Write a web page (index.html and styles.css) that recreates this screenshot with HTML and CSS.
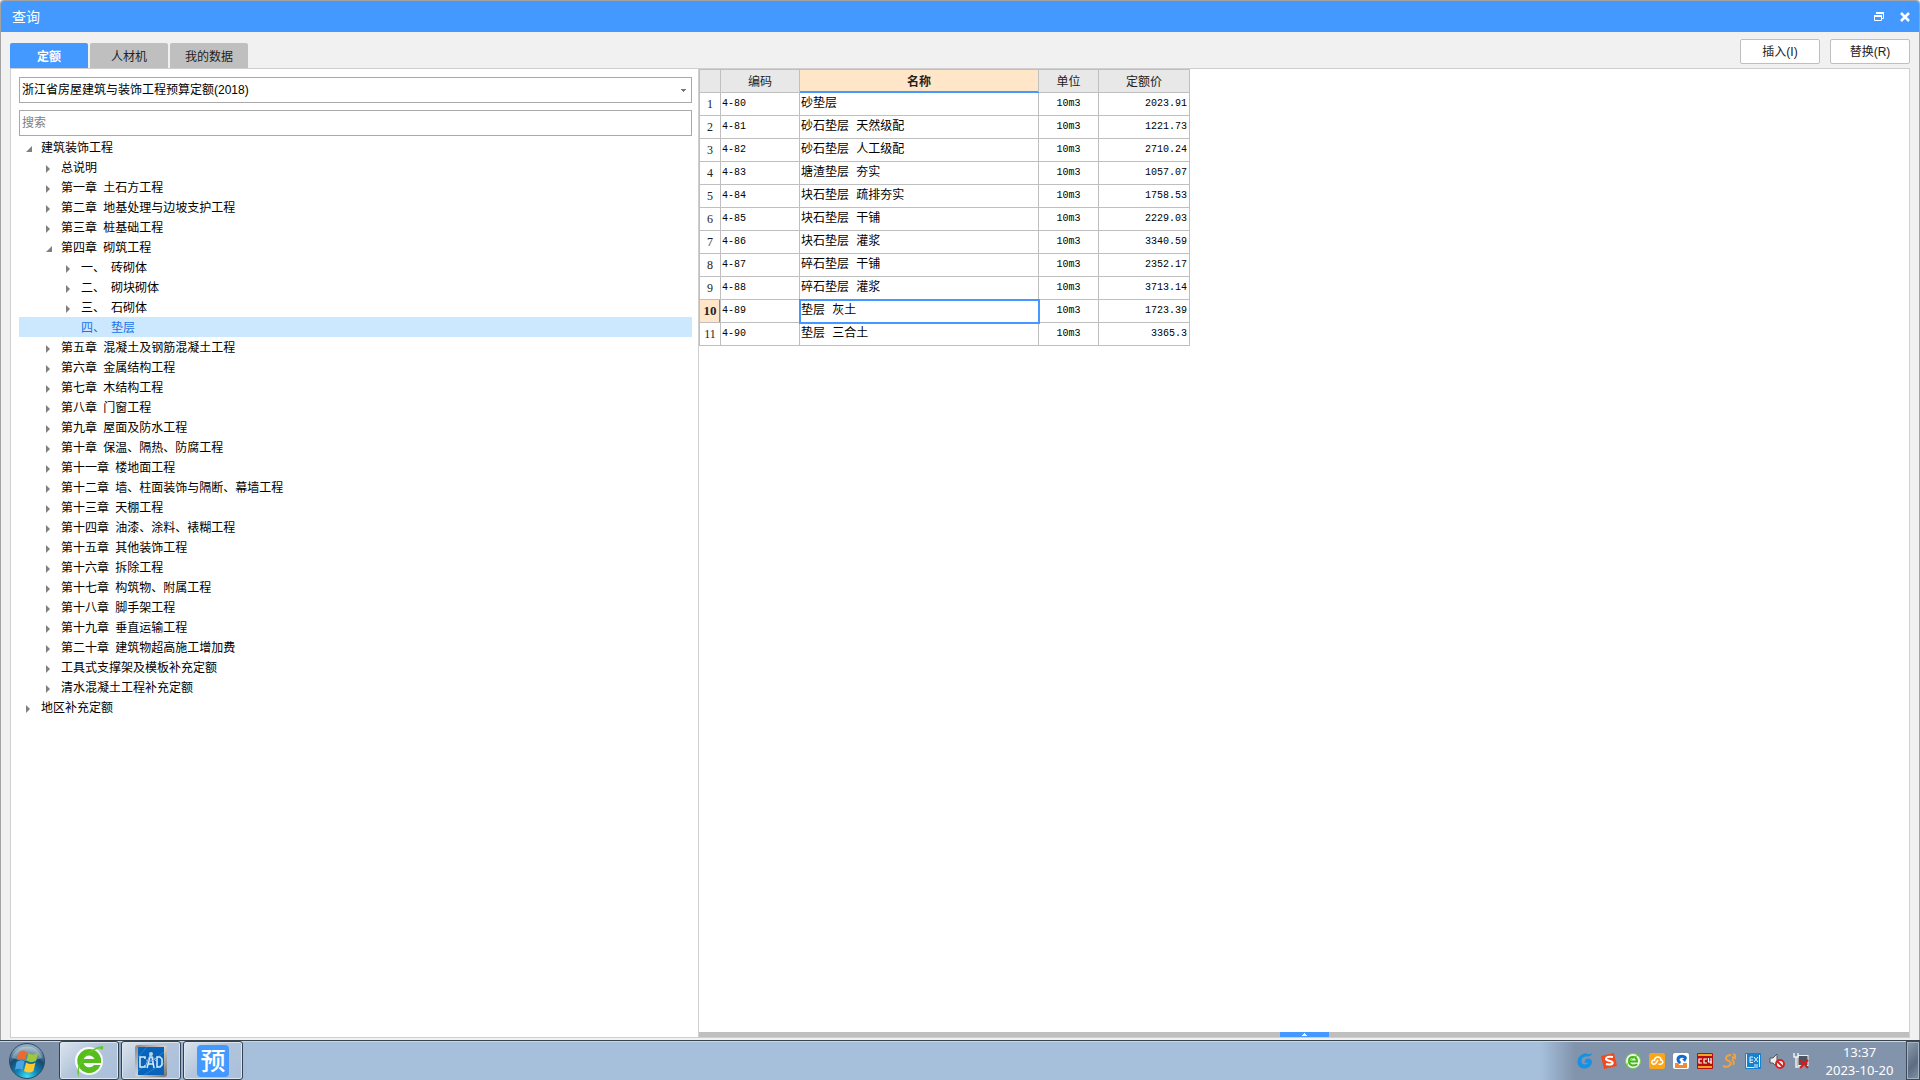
FILE: index.html
```html
<!DOCTYPE html>
<html lang="zh-CN">
<head>
<meta charset="utf-8">
<title>查询</title>
<link rel="stylesheet" href="styles.css">
</head>
<body>
<main class="window">
  <header class="titlebar">
    <h1 class="title">查询</h1>
    <button class="win-btn" aria-label="还原"><svg width="12" height="12" viewBox="0 0 12 12"><path d="M3 2H10.500V7.500H9M1.500 5H8.500V9.500H1.500Z" fill="none" stroke="#fff" stroke-width="1"/><path d="M3 2H11M1 5H9" stroke="#fff" stroke-width="2"/></svg></button>
    <button class="win-btn" aria-label="关闭"><svg width="12" height="12" viewBox="0 0 12 12"><path d="M2 2L10 10M10 2L2 10" fill="none" stroke="#fff" stroke-width="2.500"/></svg></button>
  </header>
  <div class="toolbar">
    <nav class="tabs">
      <button class="tab active">定额</button>
      <button class="tab">人材机</button>
      <button class="tab">我的数据</button>
    </nav>
    <div class="actions">
      <button class="action">插入(I)</button>
      <button class="action">替换(R)</button>
    </div>
  </div>
  <div class="panels">
    <section class="side">
      <select class="field library" aria-label="定额库"><option>浙江省房屋建筑与装饰工程预算定额(2018)</option></select>
      <input class="field search" type="text" placeholder="搜索" aria-label="搜索">
      <ul class="tree">
        <li class="node open">建筑装饰工程</li>
        <li class="node l2">总说明</li>
        <li class="node l2"><span class="chapter">第一章</span> 土石方工程</li>
        <li class="node l2"><span class="chapter">第二章</span> 地基处理与边坡支护工程</li>
        <li class="node l2"><span class="chapter">第三章</span> 桩基础工程</li>
        <li class="node l2 open"><span class="chapter">第四章</span> 砌筑工程</li>
        <li class="node l3"><span class="num">一、</span>砖砌体</li>
        <li class="node l3"><span class="num">二、</span>砌块砌体</li>
        <li class="node l3"><span class="num">三、</span>石砌体</li>
        <li class="node l3 selected"><span class="num">四、</span>垫层</li>
        <li class="node l2"><span class="chapter">第五章</span> 混凝土及钢筋混凝土工程</li>
        <li class="node l2"><span class="chapter">第六章</span> 金属结构工程</li>
        <li class="node l2"><span class="chapter">第七章</span> 木结构工程</li>
        <li class="node l2"><span class="chapter">第八章</span> 门窗工程</li>
        <li class="node l2"><span class="chapter">第九章</span> 屋面及防水工程</li>
        <li class="node l2"><span class="chapter">第十章</span> 保温、隔热、防腐工程</li>
        <li class="node l2"><span class="chapter">第十一章</span> 楼地面工程</li>
        <li class="node l2"><span class="chapter">第十二章</span> 墙、柱面装饰与隔断、幕墙工程</li>
        <li class="node l2"><span class="chapter">第十三章</span> 天棚工程</li>
        <li class="node l2"><span class="chapter">第十四章</span> 油漆、涂料、裱糊工程</li>
        <li class="node l2"><span class="chapter">第十五章</span> 其他装饰工程</li>
        <li class="node l2"><span class="chapter">第十六章</span> 拆除工程</li>
        <li class="node l2"><span class="chapter">第十七章</span> 构筑物、附属工程</li>
        <li class="node l2"><span class="chapter">第十八章</span> 脚手架工程</li>
        <li class="node l2"><span class="chapter">第十九章</span> 垂直运输工程</li>
        <li class="node l2"><span class="chapter">第二十章</span> 建筑物超高施工增加费</li>
        <li class="node l2">工具式支撑架及模板补充定额</li>
        <li class="node l2">清水混凝土工程补充定额</li>
        <li class="node">地区补充定额</li>
      </ul>
    </section>
    <section class="content">
      <div class="sheet">
        <table class="grid">
          <colgroup><col class="c-idx"><col class="c-code"><col class="c-name"><col class="c-unit"><col class="c-price"></colgroup>
          <thead><tr><th></th><th>编码</th><th class="current">名称</th><th>单位</th><th>定额价</th></tr></thead>
          <tbody>
            <tr><th>1</th><td>4-80</td><td>砂垫层</td><td>10m3</td><td>2023.91</td></tr>
            <tr><th>2</th><td>4-81</td><td>砂石垫层 天然级配</td><td>10m3</td><td>1221.73</td></tr>
            <tr><th>3</th><td>4-82</td><td>砂石垫层 人工级配</td><td>10m3</td><td>2710.24</td></tr>
            <tr><th>4</th><td>4-83</td><td>塘渣垫层 夯实</td><td>10m3</td><td>1057.07</td></tr>
            <tr><th>5</th><td>4-84</td><td>块石垫层 疏排夯实</td><td>10m3</td><td>1758.53</td></tr>
            <tr><th>6</th><td>4-85</td><td>块石垫层 干铺</td><td>10m3</td><td>2229.03</td></tr>
            <tr><th>7</th><td>4-86</td><td>块石垫层 灌浆</td><td>10m3</td><td>3340.59</td></tr>
            <tr><th>8</th><td>4-87</td><td>碎石垫层 干铺</td><td>10m3</td><td>2352.17</td></tr>
            <tr><th>9</th><td>4-88</td><td>碎石垫层 灌浆</td><td>10m3</td><td>3713.14</td></tr>
            <tr><th class="current">10</th><td>4-89</td><td class="focused">垫层 灰土</td><td>10m3</td><td>1723.39</td></tr>
            <tr><th>11</th><td>4-90</td><td>垫层 三合土</td><td>10m3</td><td>3365.3</td></tr>
          </tbody>
        </table>
      </div>
      <div class="splitter"><button class="splitter-handle" aria-label="展开"><svg width="5" height="3" viewBox="0 0 5 3"><path d="M2 0H3V1H4V2H5V3H0V2H1V1H2Z" fill="#fff"/></svg></button></div>
    </section>
  </div>
</main>
<footer class="taskbar">
  <button class="start" aria-label="开始">
    <svg width="36" height="38" viewBox="0 0 36 38">
      <defs><radialGradient id="orb" cx=".5" cy=".95" r=".85"><stop offset="0" stop-color="#3fe0f5"/><stop offset=".35" stop-color="#0f86b8"/><stop offset=".7" stop-color="#164a70"/><stop offset="1" stop-color="#8fa9bd"/></radialGradient></defs>
      <circle cx="18" cy="19" r="17.500" fill="url(#orb)" stroke="#294b68"/>
      <path d="M3 16A15.500 15.500 0 0 1 33 16Q18 22 3 16Z" fill="#fff" opacity=".3"/>
      <path d="M10 10Q14 7 18 10L16 18Q12 15.500 8 18Z" fill="#ee6a2c"/>
      <path d="M19.500 11Q24 14 29 11L27 19Q22 21.500 17.500 18.500Z" fill="#9cc83c"/>
      <path d="M7.500 20Q11.500 17 15.500 19.500L13.500 28Q10 25.500 6 28Z" fill="#4aa3e4"/>
      <path d="M17 20.500Q22 23.500 26.500 20.500L24.500 29Q20 32 15 29Z" fill="#fdc92f"/>
    </svg>
  </button>
  <button class="task" aria-label="浏览器">
    <svg width="32" height="34" viewBox="0 0 32 34">
      <circle cx="16" cy="17" r="14" fill="#fff" opacity=".9"/>
      <path d="M16 5a12 12 0 1 0 11.500 16H21a6 6 0 0 1-10.500-2H28A12 12 0 0 0 16 5ZM10.500 15a6 6 0 0 1 11 0Z" fill="#56bd1c" fill-rule="evenodd"/>
      <path d="M6 33C0 26 12 4 30 2Q31 4 29 6Q27 3 22 6C11 11 5 21 6 29Q5 31 6 33Z" fill="#65c925"/>
    </svg>
  </button>
  <button class="task" aria-label="CAD">
    <svg width="32" height="32" viewBox="0 0 32 32">
      <defs><linearGradient id="frame" x2="1" y2="1"><stop offset="0" stop-color="#8d8480"/><stop offset=".5" stop-color="#d5d0cc"/><stop offset="1" stop-color="#77706c"/></linearGradient></defs>
      <rect width="32" height="32" rx="3" fill="url(#frame)"/><rect x="3" y="2" width="26" height="28" fill="#0864ba"/>
      <path d="M3 12L12 2M3 26L29 7M9 30L29 18" stroke="#2384d3"/>
      <path d="M10 14V12H5V22H10V20M12 23L15 12H17L19 23M13 19H18M22 12H25L27 14V20L25 22H22Z" fill="none" stroke="#d9edfb" stroke-width="1.500"/>
      <path d="M15 10L10 22M16 10L21 16M11 15Q16 18 21 13" fill="none" stroke="#8fb8da"/><circle cx="16" cy="9" r="2" fill="#b9d3e8"/>
    </svg>
  </button>
  <button class="task"><span class="budget-icon">预</span></button>
  <div class="tray">
    <svg width="16" height="16" viewBox="0 0 16 16"><path d="M15.500 0Q14 4 9 3.500Q4.500 4 4.500 8Q4.500 11.500 8 11.500Q10.500 11.500 11 9.500Q9 10.500 7.500 9Q8 6 11 5.500Q15 5.500 15 9Q14.500 13 10.500 15Q4 17 1 12Q-1 6 4 2Q8-1 11 1Q14 1.500 15.500 0Z" fill="#1592e6"/></svg>
    <svg width="16" height="16" viewBox="0 0 16 16"><path d="M0 3L13 0L16 13L3 16Z" fill="#f2491c"/><path d="M12 4Q5 3 5 6Q5 7 9 8Q13 9 11 11Q9 12 5 11" fill="none" stroke="#fff" stroke-width="2.200"/></svg>
    <svg width="16" height="16" viewBox="0 0 16 16"><circle cx="8" cy="8" r="7.500" fill="#eef8e9" stroke="#79c95a"/><path d="M4.500 8.500H12Q12 4 8 4Q4 4 4 8Q4 12 8 12.500Q11 12.500 12 11" fill="none" stroke="#42b51c" stroke-width="2"/><path d="M2 15Q0 9 15 1" fill="none" stroke="#5fc92d"/></svg>
    <svg width="16" height="16" viewBox="0 0 16 16"><rect width="16" height="16" rx="2" fill="#fba618"/><path d="M9 7L7 10Q6 11.500 4 11Q2 10 3 8Q4 7 5.500 7.500Q6 4 9 4Q12 4 12 7Q14.500 8 13.500 10Q12 12 9.500 11" fill="none" stroke="#fff" stroke-width="1.500"/></svg>
    <svg width="16" height="16" viewBox="0 0 16 16"><rect width="16" height="16" rx="2" fill="#fff"/><path d="M13 3Q7 0 4 4Q2 9 7 11L8 9Q5 6 8 5Q10 4 11 6H9L12 9L14 5Z" fill="#126bd0"/><path d="M2 10H6V12H10V10H14V15H2Z" fill="#f08a35"/></svg>
    <svg width="16" height="16" viewBox="0 0 16 16"><rect width="16" height="16" rx="1" fill="#b80e0a"/><path d="M1 2H15M1 14H15" stroke="#f6a224" stroke-width="2"/><path d="M5 6H2V10H5M10 6H7V10H10M11.500 5V9H15M14 5V11" fill="none" stroke="#fff" stroke-width="1.200"/></svg>
    <svg width="16" height="16" viewBox="0 0 16 16"><path d="M10 2Q5 2 5 5.500Q5 7 8 8Q11 10 9 12Q7 15 2 13M12 1L14 2V5L11 4M11 6Q14 9 12 12" fill="none" stroke="#f2a13a" stroke-width="2"/></svg>
    <svg width="16" height="16" viewBox="0 0 16 16"><rect width="16" height="16" rx="1" fill="#1681cf"/><path d="M1.500 1V14.500H9M14.500 2V14M5 4H8M5 7H8M5 4V9.500H8M9 4L13 9M13 4L9 9M9 12H13M9 14H13" fill="none" stroke="#e5f5ff" stroke-width="1"/></svg>
    <svg width="16" height="16" viewBox="0 0 16 16"><path d="M1 5H4L8 1V14L4 10H1Z" fill="#eee" stroke="#555"/><circle cx="11" cy="11" r="4" fill="#fff" stroke="#dc2020" stroke-width="2"/><path d="M8 8L14 14" stroke="#dc2020" stroke-width="2"/></svg>
    <svg width="16" height="16" viewBox="0 0 16 16"><rect x="5" y="2.500" width="10" height="10" fill="#4c5560" stroke="#eee"/><path d="M1 0V4H5V0M3 4V14H8" fill="none" stroke="#eee" stroke-width="1.500"/><path d="M7 7L15 15M15 7L7 15" stroke="#e01717" stroke-width="2"/></svg>
  </div>
  <div class="clock"><time>13:37</time><time>2023-10-20</time></div>
  <button class="show-desktop" aria-label="显示桌面"></button>
</footer>
</body>
</html>
```
FILE: styles.css
```css
* { box-sizing: border-box; }

body {
  margin: 0;
  min-height: 100vh;
  display: flex;
  flex-direction: column;
  background: #f1f1f1;
  color: #000;
  font: 12px/20px "Liberation Sans", "Noto Sans CJK SC", sans-serif;
}

button, input, select { font: inherit; color: inherit; margin: 0; padding: 0; border: 0; }

.window {
  flex: 1;
  display: flex;
  flex-direction: column;
  border: 1px solid #a3a3a3;
  border-bottom: 0;
  border-radius: 4px 4px 0 0;
  overflow: hidden;
}

.titlebar {
  display: flex;
  align-items: center;
  height: 31px;
  padding: 0 8px 0 11px;
  gap: 14px;
  background: #4399ff;
  color: #fff;
}
.title { flex: 1; margin: 0; font-size: 14px; font-weight: 400; }
.win-btn { display: flex; background: none; }

.toolbar { display: flex; justify-content: space-between; height: 36px; padding: 0 9px; }
.tabs { display: flex; align-items: flex-end; gap: 2px; }
.tab { width: 78px; height: 25px; padding-top: 2px; background: #bfbfbf; border-radius: 2px 2px 0 0; color: #222; }
.tab.active { background: #4399ff; color: #fff; font-weight: 700; }
.actions { display: flex; gap: 10px; padding-top: 7px; }
.action { width: 80px; height: 25px; background: #fff; border: 1px solid #bfbfbf; border-radius: 2px; color: #222; }

.panels {
  flex: 1;
  display: flex;
  margin: 0 9px 2px;
  border: 1px solid #cfcfcf;
  background: #fff;
}
.side { width: 688px; padding: 8px 6px 0 8px; border-right: 1px solid #cfcfcf; }
.field { display: block; width: 100%; height: 26px; border: 1px solid #a9a9a9; background: #fff; padding: 0 2px; outline: 0; }
.field::placeholder { color: #808080; opacity: 1; }
.library {
  appearance: none;
  background: linear-gradient(#777, #777) right 5px top 11px / 5px 1px no-repeat,
    linear-gradient(#777, #777) right 6px top 12px / 3px 1px no-repeat,
    linear-gradient(#777, #777) right 7px top 13px / 1px 1px no-repeat, #fff;
}
.search { margin-top: 7px; }

.tree { list-style: none; margin: 1px 0 0; padding: 0; }
.node { display: flex; align-items: center; height: 20px; padding: 2px 0 0 7px; white-space: pre; }
.node::before {
  content: "";
  width: 4px;
  height: 8px;
  margin: 2px 11px 0 0;
  background: #808080;
  clip-path: polygon(0 0, 100% 50%, 0 100%);
}
.node.open::before { width: 6px; height: 6px; margin-right: 9px; clip-path: polygon(100% 0, 100% 100%, 0 100%); }
.node.l2 { padding-left: 27px; }
.node.l3 { padding-left: 47px; }
.chapter { margin-right: 3px; }
.num { width: 30px; }
.selected { background: #cce8ff; color: #1874e8; }
.selected::before { visibility: hidden; }

.content { flex: 1; display: flex; flex-direction: column; }
.sheet { flex: 1; }
.grid { border-collapse: collapse; table-layout: fixed; width: 491px; }
.c-idx { width: 21px; }
.c-code { width: 79px; }
.c-name { width: 239px; }
.c-unit { width: 60px; }
.c-price { width: 91px; }
.grid tr { height: 23px; }
.grid th, .grid td { padding: 0 1px; border: 1px solid #bfbfbf; line-height: 22px; white-space: nowrap; }
.grid th { font-weight: 400; color: #222; }
.grid thead th { background: #e8e8e8; padding-top: 2px; line-height: 20px; }
.grid tbody th { padding: 0; font-family: "Liberation Serif", serif; font-size: 12px; }
.grid tbody th.current { font-size: 13px; }
.grid td { font-family: "Liberation Mono", "Noto Sans CJK SC", monospace; font-size: 10px; }
.grid td:nth-child(3) { font-size: 12px; }
.grid td:nth-child(4) { text-align: center; }
.grid td:nth-child(5) { text-align: right; padding-right: 2px; }
.grid th.current, .grid thead th.current { background: #ffe6c8; font-weight: 700; }
.grid thead th.current { border-bottom-color: #4399ff; box-shadow: inset 0 -1px #4399ff; }
.grid tbody th.current { box-shadow: inset -1px 0 #4399ff; }
.focused { outline: 2px solid #4399ff; outline-offset: -1px; }

.splitter { display: flex; justify-content: center; height: 5px; background: #bfbfbf; }
.splitter-handle { display: flex; justify-content: center; align-items: center; width: 49px; height: 5px; background: #4399ff; }

.taskbar {
  display: flex;
  height: 40px;
  border-top: 1px solid #39434e;
  box-shadow: inset 0 1px #c9d7e5;
  background: linear-gradient(90deg, #8092aa 0, #8092aa 50px, #a6c0dc 250px, #a6c0dc calc(100% - 380px), #8294ac calc(100% - 345px));
}
.start { width: 59px; display: flex; justify-content: center; align-items: center; padding-right: 6px; background: none; }
.task {
  display: flex;
  justify-content: center;
  align-items: center;
  width: 60px;
  margin-right: 2px;
  border: 1px solid #34414f;
  border-radius: 3px;
  box-shadow: inset 0 0 0 1px #dce6f1;
  background: linear-gradient(135deg, #dce4ed, #b3c5db 45%, #a9bfda);
}
.budget-icon { width: 32px; height: 32px; border-radius: 4px; background: #4399ff; color: #fff; font-size: 25px; line-height: 32px; font-weight: 500; }
.tray { display: flex; align-items: center; gap: 8px; margin-left: auto; }
.clock { display: flex; flex-direction: column; width: 97px; padding: 2px 0 0 4px; text-align: center; color: #fff; font: 13px/18px "Noto Sans", sans-serif; }
.show-desktop { width: 14px; border: 1px solid #3d4a58; box-shadow: inset 0 0 0 1px #a5b2c1; background: linear-gradient(135deg, #8c9bad, #5d6d81 60%, #8294a8); }
```
